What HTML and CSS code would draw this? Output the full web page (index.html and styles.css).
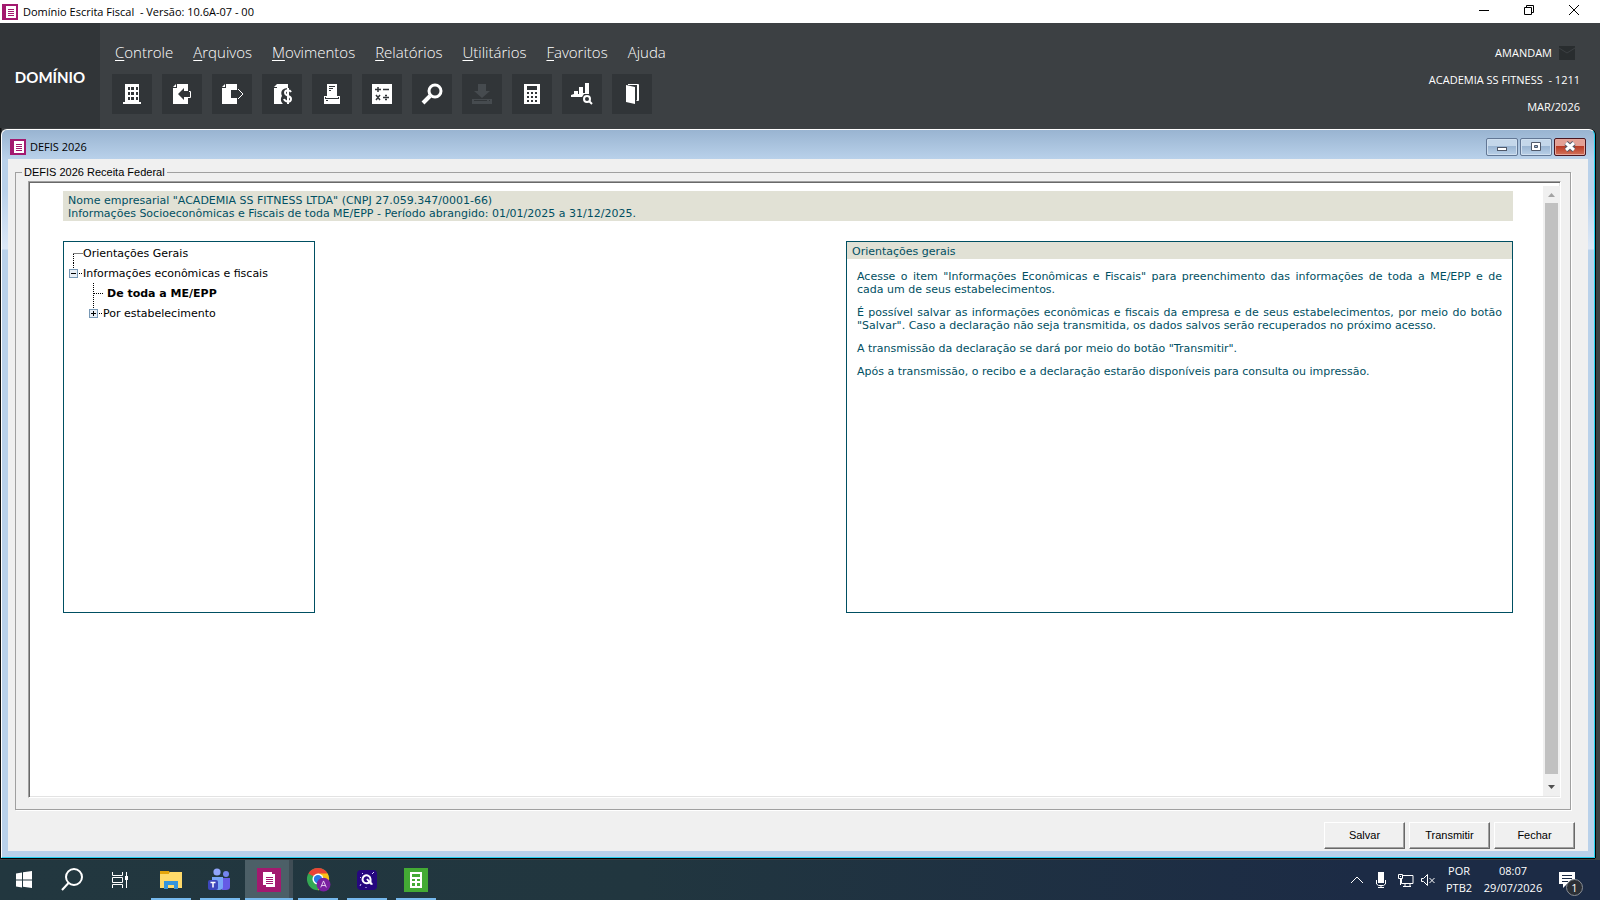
FILE: index.html
```html
<!DOCTYPE html>
<html lang="pt-BR">
<head>
<meta charset="utf-8">
<title>Domínio Escrita Fiscal</title>
<link rel="stylesheet" href="styles.css">
</head>
<body>
<header class="titlebar">
  <svg class="app-icon" viewBox="0 0 16 16"><rect x="1" y="1" width="14" height="14" fill="#fff" stroke="#a3196f" stroke-width="2"/><path d="M3 0v16" stroke="#a3196f" stroke-width="2"/><path d="M6 5.500h6M6 7.500h6M6 9.500h6M6 11.500h6" stroke="#a3196f"/></svg>
  <h1 class="app-name">Domínio Escrita Fiscal&nbsp; - Versão: 10.6A-07 - 00</h1>
  <div class="sys-buttons">
    <button class="sys" aria-label="Minimizar"><svg viewBox="0 0 12 12"><path d="M1 6.500h10"/></svg></button>
    <button class="sys" aria-label="Restaurar"><svg viewBox="0 0 12 12"><path d="M1.500 3.500h7v7h-7zM3.500 3.500v-2h7v7h-2"/></svg></button>
    <button class="sys" aria-label="Sair"><svg viewBox="0 0 12 12"><path d="M1 1l10 10M11 1L1 11"/></svg></button>
  </div>
</header>

<section class="ribbon">
  <div class="brand">DOMÍNIO</div>
  <div class="commands">
    <nav class="menu">
      <a href="#"><u>C</u>ontrole</a><a href="#"><u>A</u>rquivos</a><a href="#"><u>M</u>ovimentos</a><a href="#"><u>R</u>elatórios</a><a href="#"><u>U</u>tilitários</a><a href="#"><u>F</u>avoritos</a><a href="#">Ajuda</a>
    </nav>
    <div class="tools">
      <button class="tool" aria-label="Empresas"><svg viewBox="0 0 22 22"><path fill="#fff" fill-rule="evenodd" d="M4 1h14v18h2v2H2v-2h2zM7 4v3h2V4zm3 0v3h3V4zm5 0v3h2V4zM7 9v3h2V9zm3 0v3h3V9zm5 0v3h2V9zM7 14v3h2v-3zm3 0v3h3v-3zm5 0v3h2v-3z"/></svg></button>
      <button class="tool" aria-label="Importar"><svg viewBox="0 0 22 22"><path fill="#fff" d="M6 1h11v20H2V5h4z"/><path fill="#fff" d="M2 4l3-3v3z"/><path fill="#313538" d="M7 11l6-6v3h6v6h-6v3z"/><path d="M18 8.500h1.500v6H17" fill="none" stroke="#fff"/></svg></button>
      <button class="tool" aria-label="Exportar"><svg viewBox="0 0 22 22"><path fill="#fff" d="M5 1h11v6h-6v8h6v6H1V5h4z"/><path fill="#fff" d="M1 4l3-3v3z"/><path d="M17 6l5 5-5 5" fill="none" stroke="#fff"/></svg></button>
      <button class="tool" aria-label="Valores"><svg viewBox="0 0 22 22"><path fill="#fff" d="M6 1h11v4c-6 0-8 4-6 8-2 3-1 6 1 8H3V5h3z"/><path fill="#fff" d="M3 4l3-3v3z"/><path d="M20 9c-1-2-6-3-6 1 0 3 6 2 6 6 0 4-6 3-7 0M17 5v16" fill="none" stroke="#fff" stroke-width="2"/></svg></button>
      <button class="tool" aria-label="Imprimir"><svg viewBox="0 0 22 22"><path fill="#fff" fill-rule="evenodd" d="M6 1h10v12h3v8H3v-8h3zM8 3v1h6V3zm0 2v1h4V5zm0 2v1h2V7zM4 14v2h14v-2h-1v1H5v-1zM5 17v1h2v-1z"/></svg></button>
      <button class="tool" aria-label="Cálculos"><svg viewBox="0 0 22 22"><path fill="#fff" d="M1 1h20v20H1z"/><path d="M4 6.500h6M7 4v5M12 6.500h6M5 12l4 5M9 12l-4 5M12 14.500h6M14 12.500h2M14 16.500h2" stroke="#313538" stroke-width="1.500"/></svg></button>
      <button class="tool" aria-label="Pesquisar"><svg viewBox="0 0 22 22"><circle cx="14" cy="8" r="6" fill="none" stroke="#fff" stroke-width="3"/><path d="M9 13l-7 7" stroke="#fff" stroke-width="4"/></svg></button>
      <button class="tool" aria-label="Baixar" disabled><svg viewBox="0 0 22 22"><path fill="#464b4f" d="M7 1h8v7h4l-8 7-8-7h4zM1 16h20v5H1z"/><path d="M3 17.500h13M18 17.500h1" stroke="#313538"/></svg></button>
      <button class="tool" aria-label="Calculadora"><svg viewBox="0 0 22 22"><path fill="#fff" d="M3 1h16v20H3z"/><path fill="#313538" d="M6 3h10v4H6z"/><path d="M6 10h10M6 14h10M6 18h10" stroke="#313538" stroke-width="2" stroke-dasharray="2"/></svg></button>
      <button class="tool" aria-label="Análises"><svg viewBox="0 0 22 22"><path fill="#fff" d="M0 12l3-1V8h4v3h1V4h4v6h2V0h4v11H13l-2 3H0z"/><circle cx="16" cy="16" r="3" fill="#313538" stroke="#fff" stroke-width="2"/><path d="M18 18l3 3" stroke="#fff" stroke-width="2"/></svg></button>
      <button class="tool" aria-label="Porta"><svg viewBox="0 0 22 22"><path fill="#fff" d="M5 2l9 2v17l-9-2z"/><path d="M7 1.500h10.500v16h-2M16.500 2v15" fill="none" stroke="#fff"/></svg></button>
    </div>
  </div>
  <div class="session">
    <div class="user">AMANDAM <svg viewBox="0 0 16 14"><path fill="#292d2f" d="M0 0h16v14H0z"/><path d="M0 2l8 5 8-5" fill="none" stroke="#3c4043"/></svg></div>
    <div>ACADEMIA SS FITNESS&nbsp; - 1211</div>
    <div>MAR/2026</div>
  </div>
</section>

<main class="workspace">
  <section class="window">
    <header class="window-bar">
      <svg class="app-icon" viewBox="0 0 16 16"><rect x="1" y="1" width="14" height="14" fill="#fff" stroke="#a3196f" stroke-width="2"/><path d="M3 0v16" stroke="#a3196f" stroke-width="2"/><path d="M6 5.500h6M6 7.500h6M6 9.500h6M6 11.500h6" stroke="#a3196f"/></svg>
      <h2 class="window-name">DEFIS 2026</h2>
      <button class="wbtn" aria-label="Minimizar janela"><svg viewBox="0 0 12 10"><rect x="1.500" y="5.500" width="9" height="3" fill="#fff" stroke="#50596a"/></svg></button>
      <button class="wbtn" aria-label="Maximizar janela"><svg viewBox="0 0 12 10"><path fill="#fff" fill-rule="evenodd" stroke="#50596a" d="M1.500.500h9v8h-9zM4.500 3.500v2h3v-2z"/></svg></button>
      <button class="wbtn close" aria-label="Fechar janela"><svg viewBox="0 0 12 10"><path d="M2 1l8 7M10 1L2 8" stroke="#50596a" stroke-width="5"/><path d="M2 1l8 7M10 1L2 8" stroke="#fff" stroke-width="3"/></svg></button>
    </header>
    <div class="client">
      <fieldset class="group">
        <legend>DEFIS 2026 Receita Federal</legend>
        <div class="viewer">
          <div class="page">
            <div class="company">Nome empresarial "ACADEMIA SS FITNESS LTDA" (CNPJ 27.059.347/0001-66)<br>Informações Socioeconômicas e Fiscais de toda ME/EPP - Período abrangido: 01/01/2025 a 31/12/2025.</div>
            <div class="panels">
              <nav class="tree">
                <div class="node"><svg viewBox="0 0 14 20"><path class="dots" d="M4.500 20V11M4.500 10.500H14"/></svg><a href="#">Orientações Gerais</a></div>
                <div class="node"><svg viewBox="0 0 14 20"><path class="dots" d="M4.500 0v6M10 10.500h4"/><rect class="box" x=".5" y="6.500" width="8" height="8"/><path class="sign" d="M2 10.500h5"/></svg><a href="#">Informações econômicas e fiscais</a></div>
                <div class="node child"><svg viewBox="0 0 14 20"><path class="dots" d="M4.500 0v20M5 10.500h9"/></svg><a href="#" class="current">De toda a ME/EPP</a></div>
                <div class="node child"><svg viewBox="0 0 14 20"><path class="dots" d="M4.500 0v6M10 10.500h4"/><rect class="box" x=".5" y="6.500" width="8" height="8"/><path class="sign" d="M2 10.500h5M4.500 8v5"/></svg><a href="#">Por estabelecimento</a></div>
              </nav>
              <article class="help">
                <h3>Orientações gerais</h3>
                <p><span class="full-line">Acesse o item "Informações Econômicas e Fiscais" para preenchimento das informações de toda a ME/EPP e de</span> cada um de seus estabelecimentos.</p>
                <p>É possível salvar as informações econômicas e fiscais da empresa e de seus estabelecimentos, por meio do botão "Salvar". Caso a declaração não seja transmitida, os dados salvos serão recuperados no próximo acesso.</p>
                <p>A transmissão da declaração se dará por meio do botão "Transmitir".</p>
                <p>Após a transmissão, o recibo e a declaração estarão disponíveis para consulta ou impressão.</p>
              </article>
            </div>
          </div>
          <div class="scroll">
            <svg viewBox="0 0 17 17"><path d="M5 11h7L8.500 7z" fill="#a3a3a3"/></svg>
            <div class="thumb"></div>
            <svg viewBox="0 0 17 17"><path d="M5 6h7l-3.500 4z" fill="#505050"/></svg>
          </div>
        </div>
      </fieldset>
      <footer class="actions"><button>Salvar</button><button>Transmitir</button><button>Fechar</button></footer>
    </div>
  </section>
</main>

<footer class="taskbar">
  <button class="task start" aria-label="Iniciar"><svg viewBox="0 0 24 24"><path fill="#fff" d="M4 5.500l6-1v7H4zM11 4.300l9-1.300v8.500h-9zM4 12.500h6v7l-6-1zM11 12.500h9V20l-9-1.300z"/></svg></button>
  <button class="task" aria-label="Localizar"><svg viewBox="2 0 24 24"><circle cx="15" cy="9" r="8" fill="none" stroke="#fff" stroke-width="2"/><path d="M9.500 15L3 22" stroke="#fff" stroke-width="2"/></svg></button>
  <button class="task" aria-label="Visão de tarefas"><svg viewBox="2 0 24 24"><path d="M4.500 4v3.500h10V4M4.500 20v-3.500h10V20M4.500 9.500h10v5h-10zM18.500 4v16" fill="none" stroke="#fff"/><path fill="#fff" d="M17 8h3v4h-3z"/></svg></button>
  <button class="task open" aria-label="Arquivos do computador"><svg viewBox="0 0 24 24"><path fill="#e5a50b" d="M1 3h9l1 2h11v3H1z"/><path fill="#ffda6a" d="M1 5h9l1-1h12v16H1z"/><path fill="#e5a50b" d="M1 3h9v3H1z"/><path fill="#3594dc" d="M5 13h14v8h-4v-4H9v4H5z"/></svg></button>
  <button class="task open" aria-label="Teams"><svg viewBox="1 0 24 24"><circle cx="10" cy="4" r="3.600" fill="#91a5fb"/><circle cx="19" cy="6" r="3" fill="#7585ef"/><path fill="#655be5" d="M15 10h8v9q0 3-4 3h-4z"/><path fill="#78a5f8" d="M5 9h11v10q0 3-4 3H9q-4 0-4-4z"/><rect x="1" y="12" width="10" height="10" rx="2" fill="#3d47bd"/><path d="M3.500 14.500h5M6 14.500v5" stroke="#fff" stroke-width="1.500"/></svg></button>
  <button class="task open active" aria-label="Domínio"><svg viewBox="0 0 24 24"><path fill="#a3196f" d="M0 0h24v24H0z"/><path fill="#fff" d="M6 4h9v2h3v13H9v-2H6z"/><path d="M9 9.500h7M9 11.500h7M9 13.500h7M9 15.500h7" stroke="#a3196f"/></svg></button>
  <button class="task open" aria-label="Navegador"><svg viewBox="-1 0 26 26"><circle cx="12" cy="12" r="12" fill="#34a853"/><path fill="#ea4335" d="M12 12L1.600 6a12 12 0 0 1 20.800 0z"/><path fill="#fbc116" d="M12 12V6h10.400a12 12 0 0 1-10.400 18z"/><circle cx="12" cy="12" r="6" fill="#fff"/><circle cx="12" cy="12" r="4.500" fill="#2879e5"/><circle cx="18" cy="18" r="7.500" fill="#7920a0"/><path d="M15 21l3-7 3 7M16 19h4" fill="none" stroke="#e9d5f2"/></svg></button>
  <button class="task open" aria-label="Assistente"><svg viewBox="0 0 24 24"><rect x="2" y="2" width="20" height="20" rx="4" fill="#26077f"/><path d="M14.500 14a4 4 0 1 1 1-3v3q0 2 2 2M12 11l4 5" fill="none" stroke="#fff" stroke-width="2"/><path d="M7 5l1 1M17 6l2-2M5 9l1 1M6 16l-1 2M11 19v1" fill="none" stroke="#d9cdfc"/></svg></button>
  <button class="task open" aria-label="Cálculo fiscal"><svg viewBox="0 0 24 24"><path fill="#43aa34" d="M0 0h24v24H0z"/><path fill="#fff" d="M6 4h12v16H6z"/><path fill="#43aa34" d="M8 6h8v3H8zM8 11h3v2H8zM13 11h3v2h-3zM8 15h3v3H8zM13 15h3v3h-3z"/></svg></button>
  <div class="tray">
    <svg class="t-up" viewBox="0 0 14 16"><path d="M1 11l6-6 6 6"/></svg>
    <svg class="t-mic" viewBox="0 0 12 16"><rect x="3" y="0" width="6" height="11" fill="#fff" stroke="none"/><path d="M1.500 8v4l2 1.500h5l2-1.500V8M6 13v3M3 15.500h6"/></svg>
    <svg class="t-net" viewBox="0 0 17 16"><path d="M6 3.500h10v8H4.500V7M8 12v2.500M13 12v2.500M6 14.500h8M1.500 2.500h4v4h-4zM3 4.500h1M3.500 7v6"/></svg>
    <svg class="t-vol" viewBox="0 0 16 16"><path d="M1.500 6.500h2l4-4v11l-4-4h-2zM9.500 6l5 5M14.500 6l-5 5"/></svg>
    <div class="clock lang"><span>POR</span><span>PTB2</span></div>
    <div class="clock"><span>08:07</span><span>29/07/2026</span></div>
    <div class="notice"><svg viewBox="0 0 16 16"><path fill="#fff" stroke="none" d="M0 0h16v12H8l-4 4v-4H0z"/><path d="M3 3.500h10M3 6.500h10M3 9.500h6" stroke="#1c2b45"/></svg><span class="badge">1</span></div>
  </div>
</footer>
</body>
</html>
```
FILE: styles.css
```css
* { box-sizing: border-box; }
html, body { height: 100%; margin: 0; }
body {
  display: flex;
  flex-direction: column;
  min-height: 100vh;
  background: #3c4043;
  color: #000;
  font: 11px/16px "Open Sans", "Noto Sans", sans-serif;
}
h1, h2, h3, p { margin: 0; font: inherit; }
button { padding: 0; border: 0; background: none; font: inherit; color: inherit; }
a { color: inherit; text-decoration: none; }
svg { display: block; flex: none; overflow: visible; }

.titlebar { display: flex; align-items: center; height: 23px; flex: none; padding-left: 2px; background: #fff; }
.app-icon { width: 16px; height: 16px; }
.app-name { flex: 1; padding-left: 5px; }
.sys-buttons { display: flex; align-self: stretch; padding-right: 4px; }
.sys { width: 45px; display: grid; place-items: center; padding-bottom: 3px; }
.sys svg { width: 12px; height: 12px; fill: none; stroke: #000; }

.ribbon { display: flex; flex: none; height: 105px; color: #fff; }
.brand { width: 100px; display: grid; place-items: center; padding-top: 2px; background: #313538; font: 700 15px/20px Lato, sans-serif; }
.commands { flex: 1; padding: 17px 0 0 12px; }
.menu { display: flex; gap: 20px; padding-left: 3px; font-size: 15px; line-height: 24px; font-weight: 300; }
.menu u { text-underline-offset: 2px; }
.tools { display: flex; gap: 10px; margin-top: 10px; }
.tool { width: 40px; height: 40px; display: grid; place-items: center; background: #313538; }
.tool svg { width: 22px; height: 22px; }
.session { display: flex; flex-direction: column; gap: 3px; padding: 18px 20px 0 0; text-align: right; line-height: 24px; }
.user { display: flex; align-items: center; justify-content: flex-end; gap: 7px; padding-right: 5px; }
.user svg { width: 16px; height: 14px; }

.workspace { flex: 1; min-height: 0; display: flex; padding: 1px 5px 1px 1px; border-bottom: 1px solid #3c4043; background: linear-gradient(90deg, #111 1px, #3c4043 2px); }
.window {
  flex: 1;
  min-width: 0;
  display: flex;
  flex-direction: column;
  padding: 0 6px 6px;
  border: 1px solid #fff;
  border-right-color: #22d0f0;
  border-bottom: 1px solid #22d0f0;
  border-radius: 6px 6px 0 0;
  background: linear-gradient(#99b4d1, #b9d1ea 29px, #b9d1ea 60px, #dce8f7 119px, #b9d1ea 120px);
  box-shadow: 0 1px #000, 1px 0 #000;
}
.window-bar { display: flex; flex: none; height: 29px; padding: 0 2px; }
.window-bar .app-icon { margin-top: 9px; }
.window-name { flex: 1; padding: 9px 0 0 4px; }
.wbtn {
  width: 32px;
  height: 18px;
  margin: 8px 0 0 2px;
  display: grid;
  place-items: center;
  border: 1px solid #627795;
  border-radius: 2px;
  background: linear-gradient(#c4d7ea 45%, #9ab5d2 46%, #b9d0e8);
  box-shadow: inset 0 0 0 1px #cfdfef;
}
.wbtn svg { width: 12px; height: 10px; }
.close { border-color: #4a1620; background: linear-gradient(#e3a095 45%, #b93a24 46%, #d2735c); box-shadow: inset 0 0 0 1px #e5a79c; }

.client { flex: 1; min-height: 0; display: flex; flex-direction: column; padding: 4px 17px 0 7px; background: #f0f0f0; }
.group { flex: 1; min-height: 0; min-width: 0; display: flex; margin: 0; padding: 0 9px 11px 12px; border: 1px solid #a0a0a0; box-shadow: 1px 1px #fff; }
.group legend { margin-left: -6px; padding: 1px 2px 0 2px; font: 11px/17px "Liberation Sans", Arial, sans-serif; }
.viewer {
  flex: 1;
  min-width: 0;
  display: flex;
  border: 1px solid;
  border-color: #a0a0a0 #fff #fff #a0a0a0;
  box-shadow: inset 1px 1px #696969, inset -1px -1px #e3e3e3;
  padding: 2px 0 1px 2px;
  background: #fff;
}
.page { flex: 1; min-width: 0; padding: 7px 30px 0 32px; font: 11px/13px "DejaVu Sans", Verdana, sans-serif; color: #004f62; }
.company { padding: 3px 5px 1px; background: #e1e1d5; }
.panels { display: flex; justify-content: space-between; margin-top: 20px; }
.tree, .help { height: 372px; border: 1px solid #004f62; }
.tree { width: 252px; padding: 1px 5px; color: #000; }
.node { display: flex; height: 20px; line-height: 21px; }
.node svg { width: 14px; height: 20px; }
.child { padding-left: 20px; }
.current { padding-left: 4px; font-weight: bold; }
.dots { fill: none; stroke: #000; stroke-dasharray: 1 1; }
.box { fill: #e8eef5; stroke: #7898b5; }
.sign { stroke: #000; }
.help { width: 46%; }
.help h3 { margin-bottom: 11px; padding: 3px 5px 1px; background: #e1e1d5; }
.help p { margin: 0 10px 10px; text-align: justify; }
.full-line { display: block; text-align-last: justify; }
.scroll { width: 17px; flex: none; display: flex; flex-direction: column; margin-top: 2px; background: #f0f0f0; }
.scroll svg { width: 17px; height: 17px; }
.thumb { flex: 1; width: 13px; margin: 0 2px 5px; background: #c1c1c1; }
.actions { display: flex; flex: none; justify-content: flex-end; gap: 4px; padding: 12px 0 2px; margin-right: -4px; }
.actions button {
  width: 81px;
  height: 27px;
  padding-bottom: 2px;
  border: 1px solid;
  border-color: #fff #696969 #696969 #fff;
  box-shadow: inset -1px -1px #a0a0a0;
  font: 11px/16px "Liberation Sans", Arial, sans-serif;
}

.taskbar { display: flex; flex: none; height: 40px; background: linear-gradient(90deg, #22373f, #21363f 40%, #1c2b45 85%); color: #fff; }
.task { width: 40px; margin-right: 9px; display: grid; place-items: center; padding-top: 2px; border-bottom: 2px solid transparent; }
.task svg { width: 24px; height: 24px; }
.start { margin-left: 4px; }
.open { border-color: #76b9ed; }
.active { width: 48px; margin-right: 5px; margin-left: -4px; background: linear-gradient(90deg, #4c5f67 44px, #3f4d55 44px); }
.tray { flex: 1; display: flex; align-items: center; justify-content: flex-end; padding-right: 25px; }
.tray svg { height: 16px; fill: none; stroke: #fff; }
.t-up { width: 14px; margin-right: 11px; }
.t-mic { width: 12px; margin-right: 10px; }
.t-net { width: 17px; margin-right: 6px; }
.t-vol { width: 16px; margin-right: 9px; }
.clock { display: flex; flex-direction: column; width: 60px; padding-bottom: 2px; text-align: center; line-height: 17px; }
.lang { width: 28px; margin-right: 10px; }
.notice { position: relative; margin-left: 16px; }
.notice svg { width: 16px; height: 16px; }
.badge { position: absolute; left: 7px; top: 7px; width: 17px; height: 17px; border: 1px solid #8a8f96; border-radius: 50%; background: #2b2f35; text-align: center; line-height: 15px; }
```
